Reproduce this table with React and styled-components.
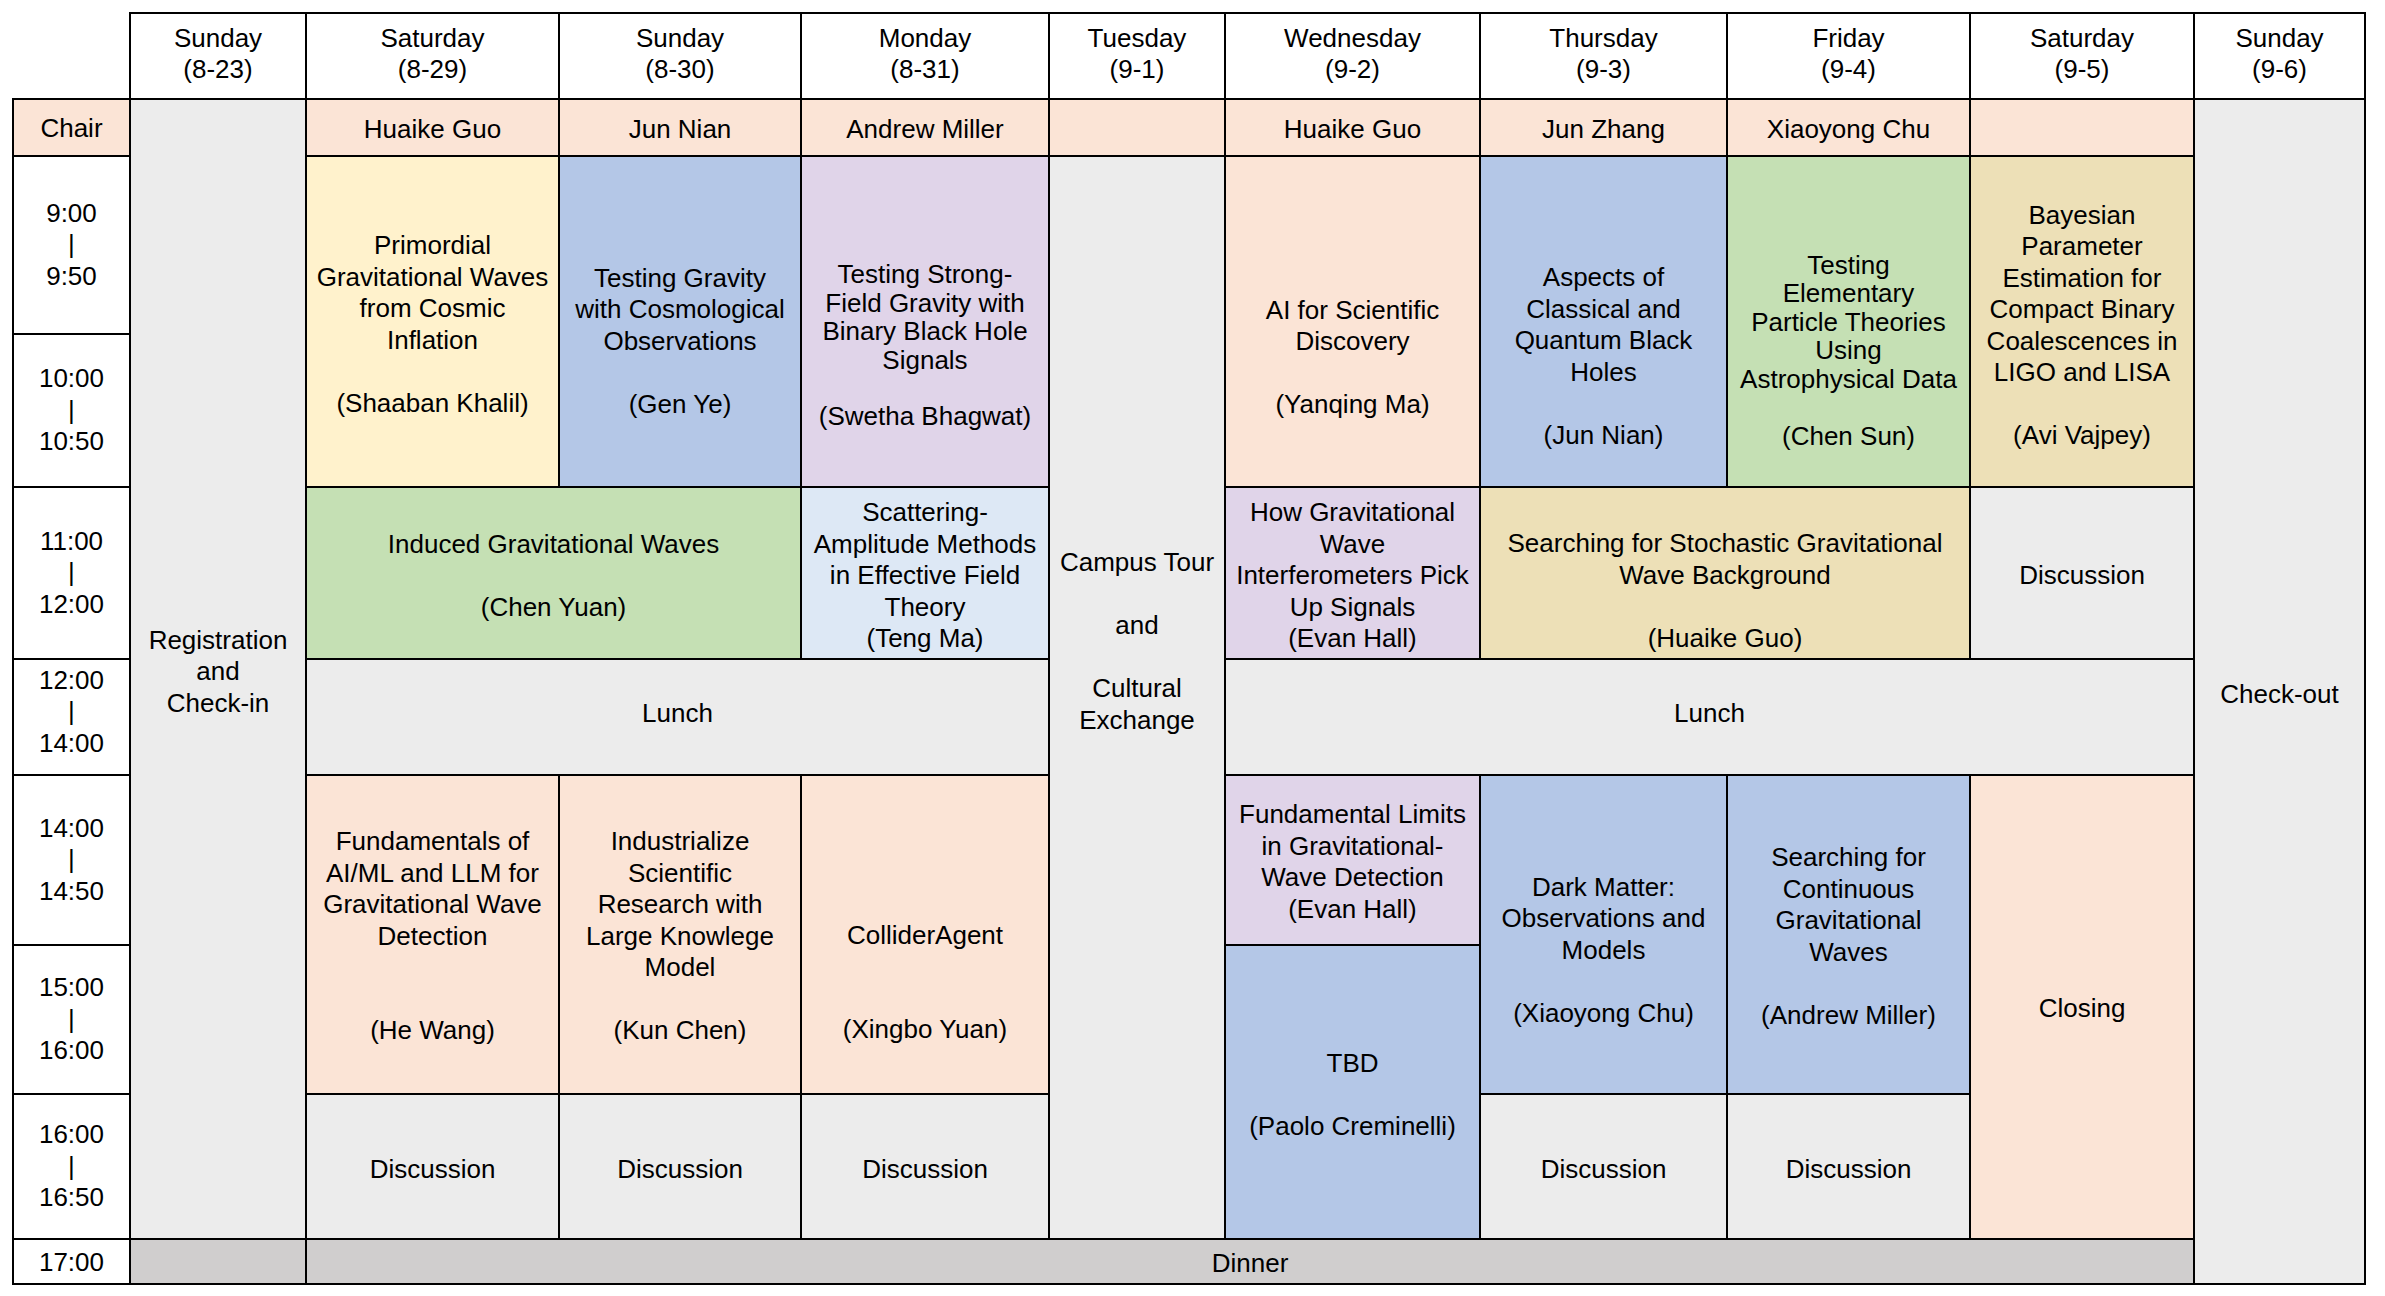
import React from 'react';
import styled, { createGlobalStyle } from 'styled-components';

const GlobalStyle = createGlobalStyle`
  body {
    margin: 0;
    background: #ffffff;
    font-family: 'Liberation Sans', Arial, sans-serif;
    color: #000000;
  }
`;

// spreadsheet fill colours
const fills = {
  white: '#ffffff',
  peach: '#fbe4d6',
  yellow: '#fff2cc',
  blue: '#b4c7e7',
  purple: '#e0d4e9',
  green: '#c5e0b4',
  sky: '#dde8f5',
  tan: '#ede0b7',
  gray: '#ececec',
  dark: '#d0cece',
};

const Page = styled.div`
  padding: 12px 0 0 12px;
`;

const Schedule = styled.div`
  display: grid;
  grid-template-columns: 119px 176px 253px 242px 248px 176px 255px 247px 243px 224px 171px;
  grid-template-rows: 88px 57px 178px 153px 172px 116px 170px 149px 145px 45px;
  font-size: 26px;
  line-height: 31.5px;
`;

const Cell = styled.div`
  grid-column: ${(p) => p.$col} / span ${(p) => p.$cs || 1};
  grid-row: ${(p) => p.$row} / span ${(p) => p.$rs || 1};
  box-sizing: border-box;
  display: flex;
  align-items: center;
  justify-content: center;
  text-align: center;
  white-space: pre;
  background: ${(p) => fills[p.$fill || 'white']};
  border-right: 2px solid #000;
  border-bottom: 2px solid #000;
  line-height: ${(p) => (p.$tight ? '28.4px' : 'inherit')};
  padding-top: ${(p) => (p.$nudge > 0 ? p.$nudge * 2 : 0)}px;
  padding-bottom: ${(p) => (p.$nudge < 0 ? -p.$nudge * 2 : 0)}px;
`;

const Corner = styled(Cell)``;

const DayHead = styled(Cell)`
  border-top: 2px solid #000;
`;

const TimeSlot = styled(Cell)`
  border-left: 2px solid #000;
`;

const Session = styled(Cell)``;

const days = [
  'Sunday\n(8-23)',
  'Saturday\n(8-29)',
  'Sunday\n(8-30)',
  'Monday\n(8-31)',
  'Tuesday\n(9-1)',
  'Wednesday\n(9-2)',
  'Thursday\n(9-3)',
  'Friday\n(9-4)',
  'Saturday\n(9-5)',
  'Sunday\n(9-6)',
];

const times = [
  { text: 'Chair', fill: 'peach', nudge: 1 },
  { text: '9:00\n|\n9:50' },
  { text: '10:00\n|\n10:50' },
  { text: '11:00\n|\n12:00' },
  { text: '12:00\n|\n14:00', nudge: -5 },
  { text: '14:00\n|\n14:50' },
  { text: '15:00\n|\n16:00' },
  { text: '16:00\n|\n16:50' },
  { text: '17:00', nudge: 1 },
];

// col / row are grid lines (1-based), cs / rs spans; nudge shifts the text down (px)
const sessions = [
  // side columns
  { col: 2, row: 2, rs: 8, fill: 'gray', nudge: 3, text: 'Registration\nand\nCheck-in' },
  { col: 2, row: 10, fill: 'dark', text: '' },
  { col: 11, row: 2, rs: 9, fill: 'gray', nudge: 3, text: 'Check-out' },

  // chairs
  { col: 3, row: 2, fill: 'peach', nudge: 2, text: 'Huaike Guo' },
  { col: 4, row: 2, fill: 'peach', nudge: 2, text: 'Jun Nian' },
  { col: 5, row: 2, fill: 'peach', nudge: 2, text: 'Andrew Miller' },
  { col: 6, row: 2, fill: 'peach', text: '' },
  { col: 7, row: 2, fill: 'peach', nudge: 2, text: 'Huaike Guo' },
  { col: 8, row: 2, fill: 'peach', nudge: 2, text: 'Jun Zhang' },
  { col: 9, row: 2, fill: 'peach', nudge: 2, text: 'Xiaoyong Chu' },
  { col: 10, row: 2, fill: 'peach', text: '' },

  // morning
  { col: 3, row: 3, rs: 2, fill: 'yellow', nudge: 3, text: 'Primordial\nGravitational Waves\nfrom Cosmic\nInflation\n\n(Shaaban Khalil)' },
  { col: 4, row: 3, rs: 2, fill: 'blue', nudge: 20, text: 'Testing Gravity\nwith Cosmological\nObservations\n\n(Gen Ye)' },
  { col: 5, row: 3, rs: 2, fill: 'purple', tight: true, nudge: 24, text: 'Testing Strong-\nField Gravity with\nBinary Black Hole\nSignals\n\n(Swetha Bhagwat)' },
  { col: 6, row: 3, rs: 7, fill: 'gray', nudge: -56, text: 'Campus Tour\n\nand\n\nCultural\nExchange' },
  { col: 7, row: 3, rs: 2, fill: 'peach', nudge: 36, text: 'AI for Scientific\nDiscovery\n\n(Yanqing Ma)' },
  { col: 8, row: 3, rs: 2, fill: 'blue', nudge: 35, text: 'Aspects of\nClassical and\nQuantum Black\nHoles\n\n(Jun Nian)' },
  { col: 9, row: 3, rs: 2, fill: 'green', tight: true, nudge: 29, text: 'Testing\nElementary\nParticle Theories\nUsing\nAstrophysical Data\n\n(Chen Sun)' },
  { col: 10, row: 3, rs: 2, fill: 'tan', nudge: 4, text: 'Bayesian\nParameter\nEstimation for\nCompact Binary\nCoalescences in\nLIGO and LISA\n\n(Avi Vajpey)' },

  // late morning
  { col: 3, row: 5, cs: 2, fill: 'green', nudge: 3, text: 'Induced Gravitational Waves\n\n(Chen Yuan)' },
  { col: 5, row: 5, fill: 'sky', nudge: 3, text: 'Scattering-\nAmplitude Methods\nin Effective Field\nTheory\n(Teng Ma)' },
  { col: 7, row: 5, fill: 'purple', nudge: 3, text: 'How Gravitational\nWave\nInterferometers Pick\nUp Signals\n(Evan Hall)' },
  { col: 8, row: 5, cs: 2, fill: 'tan', nudge: 18, text: 'Searching for Stochastic Gravitational\nWave Background\n\n(Huaike Guo)' },
  { col: 10, row: 5, fill: 'gray', nudge: 3, text: 'Discussion' },

  // lunch
  { col: 3, row: 6, cs: 3, fill: 'gray', nudge: -3, text: 'Lunch' },
  { col: 7, row: 6, cs: 4, fill: 'gray', nudge: -3, text: 'Lunch' },

  // afternoon
  { col: 3, row: 7, rs: 2, fill: 'peach', nudge: 2, text: 'Fundamentals of\nAI/ML and LLM for\nGravitational Wave\nDetection\n\n\n(He Wang)' },
  { col: 4, row: 7, rs: 2, fill: 'peach', nudge: 2, text: 'Industrialize\nScientific\nResearch with\nLarge Knowlege\nModel\n\n(Kun Chen)' },
  { col: 5, row: 7, rs: 2, fill: 'peach', nudge: 48, text: 'ColliderAgent\n\n\n(Xingbo Yuan)' },
  { col: 7, row: 7, fill: 'purple', nudge: 2, text: 'Fundamental Limits\nin Gravitational-\nWave Detection\n(Evan Hall)' },
  { col: 7, row: 8, rs: 2, fill: 'blue', nudge: 3, text: 'TBD\n\n(Paolo Creminelli)' },
  { col: 8, row: 7, rs: 2, fill: 'blue', nudge: 16, text: 'Dark Matter:\nObservations and\nModels\n\n(Xiaoyong Chu)' },
  { col: 9, row: 7, rs: 2, fill: 'blue', nudge: 2, text: 'Searching for\nContinuous\nGravitational\nWaves\n\n(Andrew Miller)' },
  { col: 10, row: 7, rs: 3, fill: 'peach', nudge: 2, text: 'Closing' },

  // discussion
  { col: 3, row: 9, fill: 'gray', nudge: 3, text: 'Discussion' },
  { col: 4, row: 9, fill: 'gray', nudge: 3, text: 'Discussion' },
  { col: 5, row: 9, fill: 'gray', nudge: 3, text: 'Discussion' },
  { col: 8, row: 9, fill: 'gray', nudge: 3, text: 'Discussion' },
  { col: 9, row: 9, fill: 'gray', nudge: 3, text: 'Discussion' },

  // evening
  { col: 3, row: 10, cs: 8, fill: 'dark', nudge: 2, text: 'Dinner' },
];

const App = () => (
  <Page>
    <GlobalStyle />
    <Schedule>
      <Corner $col={1} $row={1} />
      {days.map((d, i) => (
        <DayHead key={d} $col={i + 2} $row={1} $nudge={-2}>
          {d}
        </DayHead>
      ))}
      {times.map((t, i) => (
        <TimeSlot key={t.text} $col={1} $row={i + 2} $fill={t.fill} $nudge={t.nudge}>
          {t.text}
        </TimeSlot>
      ))}
      {sessions.map((s) => (
        <Session
          key={`${s.col}-${s.row}`}
          $col={s.col}
          $row={s.row}
          $cs={s.cs}
          $rs={s.rs}
          $fill={s.fill}
          $tight={s.tight}
          $nudge={s.nudge}
        >
          {s.text}
        </Session>
      ))}
    </Schedule>
  </Page>
);

export default App;
